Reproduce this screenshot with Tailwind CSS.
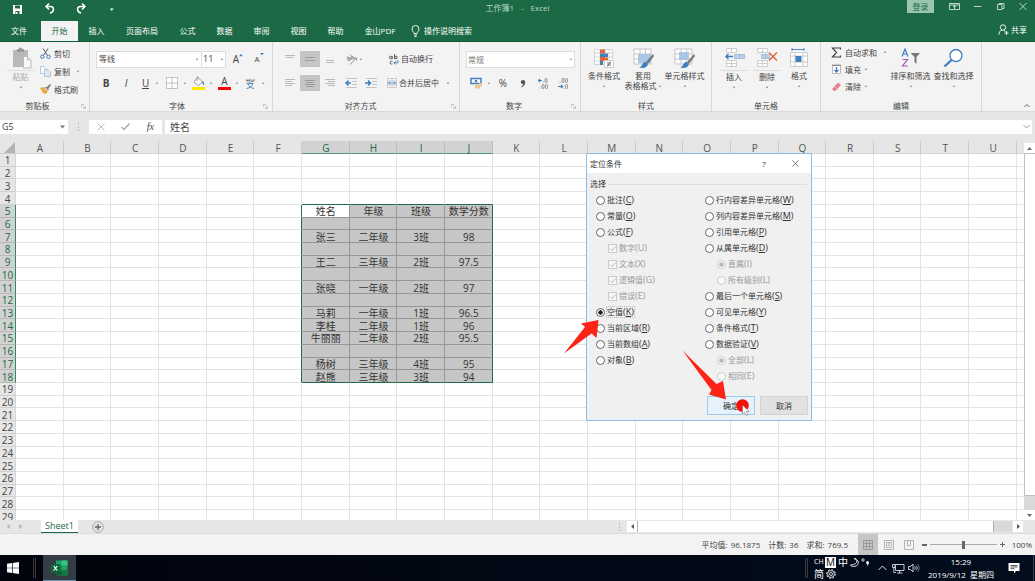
<!DOCTYPE html>
<html lang="zh-CN">
<head>
<meta charset="utf-8">
<title>工作簿1 - Excel</title>
<script src="https://cdn.jsdelivr.net/npm/@tailwindcss/browser@4"></script>
</head>
<body class="h-screen flex flex-col overflow-hidden bg-[#e6e6e6] font-['Open_Sans','Noto_Sans_CJK_SC',sans-serif] text-[8px] leading-[10px] text-[#444]">
<svg class="hidden">
  <symbol id="caret" viewBox="0 0 4 3"><path d="M0.700 0.700h2.600L2 2.300z" fill="#777"/></symbol>
  <symbol id="launch" viewBox="0 0 6 6"><path d="M0.5 4V0.5H4M2.5 2.5l2.5 2.5M5.5 2.5v3h-3" fill="none" stroke="#aaa" stroke-width=".8"/></symbol>
  <symbol id="cells" viewBox="0 0 20 20"><path d="M1 1h17v15H1zM1 6h17M1 11h17M7 1v15M12.500 1v15" fill="#fff" stroke="#c4c4c4"/></symbol>
  <symbol id="brush" viewBox="0 0 16 16"><path d="M15 1l-7 8 2 2 6-8z" fill="#777"/><path d="M8 9c-2-.5-3.500 1-4 3-.5 1.500-2 2-3 2 3 1.500 8 1.500 9-3z" fill="#3f7fc0"/></symbol>
</svg>

<header class="shrink-0 bg-[#1b6a45] text-white border-b border-[#0d5c38]">
  <div class="relative flex h-[21px] items-start justify-between">
    <div class="flex items-center pl-[12px] pt-[3px]">
      <button aria-label="保存" class="w-[32px]"><svg class="size-[11px]" viewBox="0 0 11 11"><path d="M1 1h9v9H1z" fill="#fff"/><path d="M3 1.500h5v3H3zM3.500 7h4v3h-4z" fill="#1b6a45"/><path d="M4 8h1.500v2H4z" fill="#fff"/></svg></button>
      <button aria-label="撤消" class="w-[31px]"><svg class="size-[12px]" viewBox="0 0 12 12" fill="none" stroke="#fff" stroke-width="1.500"><path d="M5 0.500L2 3.500l3 3M2 3.500h4.500c4 0 4 5.500-.5 6.500"/></svg></button>
      <button aria-label="恢复" class="w-[33px]"><svg class="size-[12px]" viewBox="0 0 12 12" fill="none" stroke="#fff" stroke-width="1.500"><path d="M7 0.500l3 3-3 3M10 3.500H5.500c-4 0-4 5.500 .5 6.500"/></svg></button>
      <button aria-label="自定义快速访问工具栏"><svg class="w-[7px] h-[5px]" viewBox="0 0 7 5"><path d="M2 1.500h3.600L3.800 4z" fill="#fff"/></svg></button>
    </div>
    <h1 class="absolute left-1/2 top-[3px] -translate-x-1/2 flex gap-[7px] text-[#b9d5c6]"><span>工作簿1</span><span>-</span><span>Excel</span></h1>
    <div class="flex items-start">
      <button class="h-[13px] w-[27px] bg-[#9ac6ae] text-[#1b6a45] mr-[15px]">登录</button>
      <button aria-label="功能区显示选项" class="w-[25px] pt-[2px]"><svg class="w-[11px] h-[9px]" viewBox="0 0 11 9" fill="none" stroke="#b9d5c6"><path d="M.5 1.500h10v6H.5zM.5 3h10M5.500 3v4.500M4 5l1.500-1.500L7 5"/></svg></button>
      <button aria-label="最小化" class="w-[23px] pt-[2px]"><svg class="w-[8px] h-[9px]" viewBox="0 0 8 9"><path d="M0 4.500h7.500" stroke="#b9d5c6"/></svg></button>
      <button aria-label="还原" class="w-[22px] pt-[2px]"><svg class="w-[8px] h-[9px]" viewBox="0 0 8 9" fill="none" stroke="#b9d5c6"><path d="M.5 2.500H5v5H.5zM2 2.500v-1h5v5H5"/></svg></button>
      <button aria-label="关闭" class="w-[16px] pt-[2px]"><svg class="w-[8px] h-[9px]" viewBox="0 0 8 9"><path d="M.5 1l7 7M7.500 1l-7 7" stroke="#b9d5c6"/></svg></button>
    </div>
  </div>
  <nav class="flex h-[20px] items-stretch">
    <button class="w-[41px] pr-[3px]">文件</button>
    <button class="w-[37px] bg-[#f3f3f3] text-[#1b6a45]">开始</button>
    <button class="w-[37px]">插入</button>
    <button class="w-[54px]">页面布局</button>
    <button class="w-[37px]">公式</button>
    <button class="w-[37px]">数据</button>
    <button class="w-[37px]">审阅</button>
    <button class="w-[37px]">视图</button>
    <button class="w-[37px]">帮助</button>
    <button class="w-[52px]">金山PDF</button>
    <button class="flex items-center gap-[4px] pl-[5px]"><svg class="w-[9px] h-[12px]" viewBox="0 0 9 12" fill="none" stroke="#fff" stroke-width=".9"><path d="M3 8.500C3 7 1 6.500 1 4a3.500 3.500 0 0 1 7 0c0 2.500-2 3-2 4.500zM3 10h3M3.500 11.500h2"/></svg>操作说明搜索</button>
    <button class="ml-auto mr-[8px] flex items-center gap-[2px] pb-[3px]"><svg class="size-[11px]" viewBox="0 0 11 11" fill="none" stroke="#fff" stroke-width=".9"><circle cx="5" cy="3.500" r="2.700"/><path d="M1 10.500c0-2 1-4 3-4.300M5.500 6.200l2 1.300M8.500 7v4M6.500 9h4"/></svg>共享</button>
  </nav>
</header>

<section aria-label="功能区" class="flex h-[70px] shrink-0 bg-[#f3f3f3] border-b border-[#dadada]">
  <!-- 剪贴板 -->
  <div class="relative flex w-[90px] flex-col border-r border-[#d8d8d8]">
    <div class="flex h-[58px]">
      <button class="flex w-[40px] flex-col items-center pt-[5px] pl-px text-[#aaa]">
        <svg class="ml-[3px] w-[20px] h-[22px]" viewBox="0 0 20 22"><path d="M1 3h15v17H1z" fill="#b9b9b9"/><path d="M5 3V2h2c0-2 3-2 3 0h2v3H5z" fill="#999"/><path d="M11.500 9.500h4l3.500 3.500v8h-7.500z" fill="#f8f8f8" stroke="#bbb"/><path d="M15.500 9.500V13H19" fill="none" stroke="#bbb"/></svg>
        <span class="mt-[1px] border-t border-[#ddd] px-[6px] pt-[1px]">粘贴</span>
        <svg class="mt-[4px] w-[4px] h-[3px]"><use href="#caret"/></svg>
      </button>
      <div class="flex flex-col gap-[7px] pt-[6px]">
        <button class="flex h-[11px] items-center gap-[3px]"><svg class="size-[11px]" viewBox="0 0 11 11" fill="none"><path d="M3 .5l4.500 7M8 .5L3.500 7.500" stroke="#555"/><circle cx="2.300" cy="8.700" r="1.700" stroke="#3f7fc0"/><circle cx="8.500" cy="8.700" r="1.700" stroke="#3f7fc0"/></svg>剪切</button>
        <button class="flex h-[11px] items-center gap-[3px]"><svg class="size-[11px]" viewBox="0 0 11 11" fill="#fff" stroke="#a9b9cc" stroke-width=".8"><path d="M.5.5H4l2 2v5H.5z"/><path d="M4.500 3.500h3.500l2.500 2.500v4.500h-6z" fill="#dce8f4"/></svg>复制<svg class="ml-[3px] w-[4px] h-[3px]"><use href="#caret"/></svg></button>
        <button class="flex h-[11px] items-center gap-[3px]"><svg class="size-[11px]" viewBox="0 0 11 11"><path d="M0 4l4-1 4 4-2 3-3-1z" fill="#e9a94d"/><path d="M5 3l2 0 3-3 1 1-2.500 3.500v2z" fill="#777"/></svg>格式刷</button>
      </div>
    </div>
    <div class="pr-[14px] pt-[1px] text-center">剪贴板</div>
    <svg class="absolute right-[3px] bottom-[2px] size-[5px]"><use href="#launch"/></svg>
  </div>
  <!-- 字体 -->
  <div class="relative flex w-[183px] flex-col border-r border-[#d8d8d8] pl-[6px]">
    <div class="flex h-[58px] flex-col pt-[9px]">
      <div class="flex h-[16px] items-center">
        <label class="flex h-[17px] w-[106px] items-center justify-between border border-[#dcdcdc] bg-white px-[2px]"><input aria-label="字体" value="等线" class="w-[80px] outline-none"><svg class="w-[4px] h-[3px]"><use href="#caret"/></svg></label>
        <label class="flex h-[17px] w-[24px] items-center justify-between border border-l-0 border-[#dcdcdc] bg-white px-[1px]"><input aria-label="字号" value="11" class="w-[14px] text-[9px] outline-none"><svg class="w-[4px] h-[3px]"><use href="#caret"/></svg></label>
        <button aria-label="增大字号" class="relative w-[20px] text-[10px]">A<svg class="absolute left-[13px] top-0 w-[4px] h-[3px]" viewBox="0 0 5 4"><path d="M0 3L2.500 0 5 3z" fill="#3f7fc0"/></svg></button>
        <button aria-label="减小字号" class="relative w-[22px] text-[8px]">A<svg class="absolute left-[14px] top-[-1px] w-[4px] h-[3px]" viewBox="0 0 5 4"><path d="M0 0h5L2.500 3z" fill="#3f7fc0"/></svg></button>
      </div>
      <div class="mt-[8px] flex h-[16px] items-center text-[10px]">
        <button class="w-[20px] font-bold">B</button>
        <button class="w-[20px] italic">I</button>
        <button class="flex w-[30px] items-center pl-[6px] gap-[6px]"><span class="border-b border-[#444] leading-[10px]">U</span><svg class="w-[4px] h-[3px]"><use href="#caret"/></svg></button>
        <button aria-label="边框" class="flex w-[26px] items-center gap-[5px]"><svg class="size-[12px]" viewBox="0 0 12 12"><path d="M.5.5h11v11H.5zM6 .5v11M.5 6h11" fill="#fff" stroke="#c2c2c2"/></svg><svg class="w-[4px] h-[3px]"><use href="#caret"/></svg></button>
        <button aria-label="填充颜色" class="flex w-[26px] items-center gap-[4px]"><svg class="w-[13px] h-[14px]" viewBox="0 0 13 14"><path d="M5.500 1.500l5 4-4 4-4.500-3.500z" fill="#fff" stroke="#888" stroke-width=".8"/><path d="M5 5V1.500c0-1 1.500-1 1.500 0" fill="none" stroke="#888" stroke-width=".8"/><path d="M10 5c2 .5 2.500 2 2 4-1.200 0-1.500-1.500-2-4z" fill="#3f7fc0"/><path d="M0 11h13v3H0z" fill="#ffe800"/></svg><svg class="w-[4px] h-[3px]"><use href="#caret"/></svg></button>
        <button aria-label="字体颜色" class="flex w-[26px] items-center gap-[4px]"><span class="w-[13px] border-b-3 border-[#f00] text-center leading-[11px]">A</span><svg class="w-[4px] h-[3px]"><use href="#caret"/></svg></button>
        <button aria-label="拼音" class="flex w-[26px] items-center gap-[5px] pl-[1px]"><svg class="size-[11px]" viewBox="0 0 11 11" fill="none"><path d="M1 1.500l1 2 1-2 1 2 1-2M6 1v2.500h2V2M9 1v2.500" stroke="#666" stroke-width=".8"/><path d="M1.500 5.500h7M5 4v1.500M3 6c.5 2 2.500 4 6 4.500M7.500 6c-.5 2-2.500 4-6 4.500" stroke="#3f7fc0" stroke-width=".9"/></svg><svg class="w-[4px] h-[3px]"><use href="#caret"/></svg></button>
      </div>
    </div>
    <div class="pl-[2px] pr-[16px] pt-[1px] text-center">字体</div>
    <svg class="absolute right-[4px] bottom-[2px] size-[5px]"><use href="#launch"/></svg>
  </div>
  <!-- 对齐方式 -->
  <div class="relative flex w-[187px] flex-col border-r border-[#d8d8d8] pl-[7px]">
    <div class="flex h-[58px] flex-col pt-[9px]">
      <div class="flex h-[16px] items-center">
        <button aria-label="顶端对齐" class="flex w-[20px] justify-center"><svg class="size-[10px]" viewBox="0 0 10 10" stroke="#bbb"><path d="M0 1.500h10M1 3.500h8"/></svg></button>
        <button aria-label="垂直居中" class="flex h-[16px] w-[20px] items-center justify-center bg-[#c6c6c6]"><svg class="size-[10px]" viewBox="0 0 10 10" stroke="#999"><path d="M0 3.500h10M0 6.500h10"/></svg></button>
        <button aria-label="底端对齐" class="flex w-[20px] justify-center"><svg class="size-[10px]" viewBox="0 0 10 10" stroke="#bbb"><path d="M1 6.500h8M1 8.500h8"/></svg></button>
        <button aria-label="方向" class="ml-[6px] flex w-[42px] items-center gap-[2px]"><svg class="size-[11px]" viewBox="0 0 11 11" fill="none" stroke="#777" stroke-width=".8"><circle cx="3" cy="5" r="1.500"/><path d="M1 2.500l3.500 3.500M4 .5L7 4"/><circle cx="6.500" cy="4" r="1.300"/><path d="M4 10.500L10.500 4M8 4h2.500v2.500"/></svg><svg class="w-[4px] h-[3px]"><use href="#caret"/></svg></button>
        <button class="flex items-center gap-[2px]"><svg class="size-[11px]" viewBox="0 0 10 10" fill="none" stroke="#555" stroke-width=".9"><circle cx="2.500" cy="3.200" r="1.200"/><path d="M3.800 2v2.500M6 0v4.500"/><circle cx="7.300" cy="3.200" r="1.200"/><path d="M4 6.700c-3-1-3 3.300 0 2.300"/><path d="M9 5.500V8H5.500M7 6.500L5.500 8 7 9.500" stroke="#3f7fc0"/></svg>自动换行</button>
      </div>
      <div class="mt-[8px] flex h-[16px] items-center">
        <button aria-label="左对齐" class="flex w-[20px] justify-center"><svg class="size-[10px]" viewBox="0 0 10 10" stroke="#bbb"><path d="M0 1.500h10M0 3.500h7M0 5.500h10M0 7.500h7"/></svg></button>
        <button aria-label="居中" class="flex h-[16px] w-[20px] items-center justify-center bg-[#c6c6c6]"><svg class="size-[10px]" viewBox="0 0 10 10" stroke="#999"><path d="M0 2.500h10M1.500 4.500h7M0 6.500h10M1.500 8.500h7"/></svg></button>
        <button aria-label="右对齐" class="flex w-[20px] justify-center"><svg class="size-[10px]" viewBox="0 0 10 10" stroke="#bbb"><path d="M0 1.500h10M3 3.500h7M0 5.500h10M3 7.500h7"/></svg></button>
        <button aria-label="减少缩进量" class="ml-[5px] w-[20px]"><svg class="w-[12px] h-[10px]" viewBox="0 0 12 10"><path d="M1 .5h11M7 3.500h5M7 6.500h5M1 9.500h11" stroke="#c4c4c4"/><path d="M6 5H1.500M3.500 2.500L1 5l2.500 2.500" stroke="#3f7fc0" stroke-width="1.500" fill="none"/></svg></button>
        <button aria-label="增加缩进量" class="w-[22px]"><svg class="w-[12px] h-[10px]" viewBox="0 0 12 10"><path d="M1 .5h11M7 3.500h5M7 6.500h5M1 9.500h11" stroke="#c4c4c4"/><path d="M0 5h5.500M3 2.500L5.500 5 3 7.500" stroke="#3f7fc0" stroke-width="1.500" fill="none"/></svg></button>
        <button class="flex items-center gap-[2px]"><svg class="size-[10px]" viewBox="0 0 10 10" fill="none"><path d="M.5.5h9v9h-9zM.5 3h9M.5 7h9M5 .5V3M5 7v2.500" fill="#fff" stroke="#c8c8c8"/><path d="M1.500 5h7M3 3.500L1.500 5 3 6.500M7 3.500L8.500 5 7 6.500" stroke="#3f7fc0" stroke-width=".9"/></svg>合并后居中<svg class="ml-[5px] w-[4px] h-[3px]"><use href="#caret"/></svg></button>
      </div>
    </div>
    <div class="pr-[18px] pt-[1px] text-center">对齐方式</div>
    <svg class="absolute right-[3px] bottom-[2px] size-[5px]"><use href="#launch"/></svg>
  </div>
  <!-- 数字 -->
  <div class="relative flex w-[121px] flex-col border-r border-[#d8d8d8] pl-[6px]">
    <div class="flex h-[58px] flex-col pt-[9px]">
      <label class="flex h-[17px] w-[109px] items-center justify-between border border-[#dcdcdc] bg-white px-[1px]"><input aria-label="数字格式" value="常规" class="w-[90px] outline-none text-[#777]"><svg class="w-[4px] h-[3px]"><use href="#caret"/></svg></label>
      <div class="mt-[7px] flex h-[16px] items-center pl-[4px]">
        <button aria-label="会计数字格式" class="flex w-[27px] items-center gap-[4px]"><svg class="w-[13px] h-[12px]" viewBox="0 0 13 12"><path d="M1 1.500h10v5H1z" fill="#fff" stroke="#3f7fc0" stroke-width="1.500"/><circle cx="6" cy="4" r="1.300" fill="#3f7fc0"/><path d="M5 8h5v3.500H5zM9 6h3v3.500H9z" fill="#f0c48c"/></svg><svg class="w-[4px] h-[3px]"><use href="#caret"/></svg></button>
        <button class="w-[12px] text-[10px]">%</button>
        <button aria-label="千位分隔样式" class="ml-[11px] w-[18px]"><svg class="w-[6px] h-[9px]" viewBox="0 0 6 9"><path d="M3 1c3 0 3.500 5-1.500 7.500L1 8c1.500-1 2-2 2-3C0 5 0 1 3 1z" fill="#555"/></svg></button>
        <button aria-label="增加小数位数" class="w-[20px]"><svg class="w-[10px] h-[11px]" viewBox="0 0 10 11" fill="none" stroke="#777" stroke-width=".8"><path d="M4 2.500H.5M2 1L.5 2.500 2 4" stroke="#3f7fc0" stroke-width="1.200"/><rect x="7" y=".5" width="2" height="4" rx="1"/><rect x="4" y="6.500" width="2" height="4" rx="1"/><rect x="7.500" y="6.500" width="2" height="4" rx="1"/><path d="M5 4h.8M1.500 10.200h.8"/></svg></button>
        <button aria-label="减少小数位数"><svg class="w-[11px] h-[11px]" viewBox="0 0 11 11" fill="none" stroke="#777" stroke-width=".8"><path d="M0 8.500h4.500M3 7l1.500 1.500L3 10" stroke="#3f7fc0" stroke-width="1.200"/><rect x="4" y=".5" width="2" height="4" rx="1"/><rect x="7.500" y=".5" width="2" height="4" rx="1"/><rect x="7.500" y="6.500" width="2" height="4" rx="1"/><path d="M1.500 4.200h.8M5.500 10.200h.8"/></svg></button>
      </div>
    </div>
    <div class="pr-[18px] pt-[1px] text-center">数字</div>
    <svg class="absolute right-[4px] bottom-[2px] size-[5px]"><use href="#launch"/></svg>
  </div>
  <!-- 样式 -->
  <div class="flex w-[131px] flex-col border-r border-[#d8d8d8]">
    <div class="flex h-[58px] pl-[4px] pt-[6px] text-center">
      <button class="flex w-[38px] flex-col items-center">
        <svg class="size-[21px]" viewBox="0 0 21 21"><path d="M.5 1.500h18v15H.5zM.5 5h18M.5 9h18M.5 13h18M6 1.500v15M11 1.500v15M15 1.500v15" fill="#fff" stroke="#ccc" stroke-width=".8"/><path d="M6 1.500h5v4H6zM11 9.500h3v3h-3z" fill="#e2663a"/><path d="M6 5.500h8v3.500H6z" fill="#3f7fc0"/><path d="M6 9h5v4H6z" fill="#e2663a"/><path d="M6 13h3v4H6z" fill="#3f7fc0"/><path d="M10.500 12.500h9v7h-9z" fill="#fff" stroke="#ccc"/><path d="M13 15h4M13 17h4M16.500 13.500l-3 5" stroke="#555" stroke-width=".8"/></svg>
        <span class="mt-[2px] whitespace-nowrap">条件格式</span><svg class="mt-[4px] w-[4px] h-[3px]"><use href="#caret"/></svg>
      </button>
      <button class="flex w-[40px] flex-col items-center">
        <svg class="size-[21px]" viewBox="0 0 21 21"><use href="#cells" width="20" height="20"/><path d="M5 6h13v9H5z" fill="#a9c6e4"/><use href="#brush" x="5" y="5" width="16" height="16"/></svg>
        <span class="mt-[2px] flex flex-col whitespace-nowrap"><span>套用</span><span class="flex items-center gap-[1px]">表格格式<svg class="w-[4px] h-[3px]"><use href="#caret"/></svg></span></span>
      </button>
      <button class="flex w-[43px] flex-col items-center">
        <svg class="size-[21px]" viewBox="0 0 21 21"><use href="#cells" width="20" height="20"/><path d="M5 4h10v8H5z" fill="#a9c6e4"/><use href="#brush" x="5" y="5" width="16" height="16"/></svg>
        <span class="mt-[2px] whitespace-nowrap">单元格样式</span><svg class="mt-[4px] w-[4px] h-[3px]"><use href="#caret"/></svg>
      </button>
    </div>
    <div class="pt-[1px] text-center">样式</div>
  </div>
  <!-- 单元格 -->
  <div class="flex w-[109px] flex-col border-r border-[#d8d8d8]">
    <div class="flex h-[58px] gap-[3px] pl-[7px] pt-[6px]">
      <button class="flex w-[30px] flex-col items-center">
        <svg class="size-[21px]" viewBox="0 0 21 21"><path d="M2.500.5h10v4h-10zM7.500.5v4M2.500 12.500h10v6h-10zM7.500 12.500v6M2.500 15.500h10" fill="#fff" stroke="#ccc"/><path d="M10.500 6.500h10v4h-10zM15.500 6.500v4" fill="#b9d0ea" stroke="#9db4cc" stroke-width=".8"/><path d="M9 8.500H2M4.500 6L2 8.500 4.500 11" stroke="#3f7fc0" stroke-width="1.500" fill="none"/></svg>
        <span class="mt-[1px] border-t border-[#ddd] px-[6px] pt-[1px]">插入</span><svg class="mt-[4px] w-[4px] h-[3px]"><use href="#caret"/></svg>
      </button>
      <button class="flex w-[30px] flex-col items-center">
        <svg class="size-[21px]" viewBox="0 0 21 21"><path d="M.5.5h10v4H.5zM5.500.5v4M.5 12.500h10v6H.5zM5.500 12.500v6M.5 15.500h10" fill="#fff" stroke="#ccc"/><path d="M4.500 6.500h8v4h-8zM8.500 6.500v4" fill="#b9d0ea" stroke="#9db4cc" stroke-width=".8"/><path d="M12 4.500l8 8M20 4.500l-8 8" stroke="#e2663a" stroke-width="1.500"/></svg>
        <span class="mt-[1px] border-t border-[#ddd] px-[6px] pt-[1px]">删除</span><svg class="mt-[4px] w-[4px] h-[3px]"><use href="#caret"/></svg>
      </button>
      <button class="flex w-[28px] flex-col items-center">
        <svg class="size-[21px]" viewBox="0 0 21 21"><path d="M1.500 4.500h17v14h-17zM6 4.500v14M14 4.500v14M1.500 8h17M1.500 14h17" fill="#fff" stroke="#ccc"/><path d="M6.500 8h6v6h-6z" fill="#3f7fc0"/><path d="M3 1.500h12M3 0v3M15 0v3" stroke="#3f7fc0" stroke-width=".9"/></svg>
        <span class="mt-[2px]">格式</span><svg class="mt-[4px] w-[4px] h-[3px]"><use href="#caret"/></svg>
      </button>
    </div>
    <div class="pt-[1px] text-center">单元格</div>
  </div>
  <!-- 编辑 -->
  <div class="flex w-[161px] flex-col border-r border-[#d8d8d8]">
    <div class="flex h-[58px] pl-[10px]">
      <div class="flex w-[58px] flex-col gap-[6px] pt-[5px]">
        <button class="flex h-[11px] items-center gap-[3px]"><svg class="size-[11px]" viewBox="0 0 11 11"><path d="M9.500 2.500V1H1.500L5.500 5.500l-4 4.500h8V8.500" fill="none" stroke="#444" stroke-width="1.200"/></svg>自动求和<svg class="ml-[3px] w-[4px] h-[3px]"><use href="#caret"/></svg></button>
        <button class="flex h-[11px] items-center gap-[3px]"><svg class="size-[11px]" viewBox="0 0 11 11"><path d="M1.500 1.500h8v8h-8z" fill="#fff" stroke="#bbb"/><path d="M1 1.200h9" stroke="#777"/><path d="M5.500 3v5M3.500 6l2 2 2-2" fill="none" stroke="#3f7fc0" stroke-width="1.300"/></svg>填充<svg class="w-[4px] h-[3px]"><use href="#caret"/></svg></button>
        <button class="flex h-[11px] items-center gap-[3px]"><svg class="size-[11px]" viewBox="0 0 11 11"><path d="M7 1.500L10 4 5 9.500 3 10 1 8z" fill="#e9808c"/><path d="M3.500 5.500L6 8" stroke="#f9c9cf" stroke-width=".8"/></svg>清除<svg class="w-[4px] h-[3px]"><use href="#caret"/></svg></button>
      </div>
      <button class="flex w-[43px] flex-col items-center pt-[6px]">
        <svg class="size-[21px]" viewBox="0 0 21 21" fill="none" stroke-width="1.200"><path d="M2 8.500L5 1l3 7.500M3 6h4" stroke="#3f7fc0"/><path d="M2.500 11.500h5l-5 6.500h5.500" stroke="#9a5fb5"/><path d="M10.500 5h9.500L16.500 9v6.500l-2-1V9z" fill="#777"/></svg>
        <span class="mt-[2px] whitespace-nowrap">排序和筛选</span><svg class="mt-[4px] w-[4px] h-[3px]"><use href="#caret"/></svg>
      </button>
      <button class="flex w-[43px] flex-col items-center pt-[6px]">
        <svg class="size-[21px]" viewBox="0 0 21 21" fill="none" stroke="#3f7fc0"><circle cx="13" cy="7.500" r="6" fill="#fff" stroke-width="1.300"/><path d="M8.500 12L1.500 18.500" stroke-width="2.300"/></svg>
        <span class="mt-[2px] whitespace-nowrap">查找和选择</span><svg class="mt-[4px] w-[4px] h-[3px]"><use href="#caret"/></svg>
      </button>
    </div>
    <div class="pt-[1px] text-center">编辑</div>
  </div>
  <button aria-label="折叠功能区" class="ml-auto mr-[5px] self-end pb-[3px]"><svg class="w-[6px] h-[5px]" viewBox="0 0 6 5"><path d="M.5 4L3 1.500 5.500 4" fill="none" stroke="#666"/></svg></button>
</section>

<section aria-label="编辑栏" class="flex h-[29px] shrink-0 items-center pr-[3px]">
  <label class="flex h-[14px] w-[68px] items-center justify-between bg-white pl-[2px] pr-[3px]"><input aria-label="名称框" value="G5" class="w-[50px] text-[9px] outline-none"><svg class="w-[5px] h-[4px]" viewBox="0 0 5 4"><path d="M0 .5h5L2.500 3.500z" fill="#777"/></svg></label>
  <svg class="mx-[9px] w-[3px] h-[8px]" viewBox="0 0 3 8"><path d="M1.500 0v8" stroke="#aaa" stroke-dasharray="1.300 2"/></svg>
  <div class="flex h-[14px] w-[73px] items-center justify-around bg-white">
    <button aria-label="取消输入"><svg class="size-[8px]" viewBox="0 0 8 8"><path d="M.5.5l7 7M7.500.5l-7 7" stroke="#bbb"/></svg></button>
    <button aria-label="输入"><svg class="size-[9px]" viewBox="0 0 9 9"><path d="M.5 5L3 7.500 8.500 1.500" stroke="#aaa" stroke-width="1.400" fill="none"/></svg></button>
    <button class="font-['Liberation_Serif',serif] italic text-[10px]">fx</button>
  </div>
  <label class="ml-[3px] flex h-[14px] grow items-center bg-white pl-[5px] pr-[2px]"><input aria-label="公式" value="姓名" class="min-w-0 grow text-[10px] outline-none"><svg class="w-[7px] h-[5px]" viewBox="0 0 7 5"><path d="M.5 1l3 3 3-3" fill="none" stroke="#999"/></svg></label>
</section>

<main class="relative flex min-h-0 flex-1">
  <div class="min-w-0 grow overflow-hidden bg-white">
    <table id="sheet" class="h-[382px] w-full table-fixed border-separate border-spacing-0 text-center text-[10px] leading-[9px]">
      <colgroup id="widths"><col class="w-[16px]"></colgroup>
      <thead><tr id="letters" class="h-[13px] bg-[#e6e6e6]"></tr></thead>
      <tbody id="rows"></tbody>
    </table>
  </div>
  <div class="flex w-[11px] shrink-0 flex-col bg-[#e6e6e6] pt-[2px]">
    <button aria-label="向上滚动" class="flex h-[10px] items-center justify-center bg-white"><svg class="w-[5px] h-[3px]" viewBox="0 0 5 3"><path d="M0 3h5L2.500 0z" fill="#666"/></svg></button>
    <div class="flex grow flex-col bg-[#d9d9d9]"><div class="h-[343px] border-y border-l border-[#c0c0c0] bg-white"></div></div>
    <button aria-label="向下滚动" class="flex h-[10px] items-center justify-center bg-white"><svg class="w-[5px] h-[3px]" viewBox="0 0 5 3"><path d="M0 0h5L2.500 3z" fill="#666"/></svg></button>
  </div>

  <!-- 定位条件 -->
  <form role="dialog" aria-label="定位条件" class="absolute left-[586px] top-[12px] flex h-[268px] w-[226px] flex-col border border-[#8fbde6] bg-[#f0f0f0] text-[#333]">
    <div class="flex h-[19px] items-center bg-white pl-[3px]">
      <h2 class="grow">定位条件</h2>
      <button type="button" class="w-[30px]">?</button>
      <button type="button" aria-label="关闭" class="flex w-[32px] justify-center"><svg class="size-[7px]" viewBox="0 0 7 7"><path d="M.5.5l6 6M6.500.5l-6 6" stroke="#555" stroke-width=".8"/></svg></button>
    </div>
    <div class="flex items-center gap-[2px] pl-[3px] pr-[4px] pt-[6px]"><span>选择</span><span class="h-px grow bg-[#dedede]"></span></div>
    <div class="flex pt-[3px]">
      <div id="left" class="w-[109px] pl-[9px]"></div>
      <div id="right" class="pl-[9px]"></div>
    </div>
    <div class="mt-auto flex justify-end gap-[5px] pb-[5px] pr-[3px]">
      <button type="button" class="h-[19px] w-[48px] border border-[#9ccbee] bg-[#e5f1fb]">确定</button>
      <button type="button" class="h-[19px] w-[48px] border border-[#d2d2d2] bg-[#e1e1e1]">取消</button>
    </div>
  </form>
  <!-- 标注箭头与点击光标 -->
  <svg class="pointer-events-none absolute left-[560px] top-[139px] h-[150px] w-[200px]" viewBox="0 0 200 150">
    <path d="M4 73.500L25 47 21 43.500 38.500 40 36.500 58 31.500 53.500z" fill="#fb2416"/>
    <path d="M122.500 70.500L156.500 104 163 101 166 119.500 149 114.500 151.500 110z" fill="#fb2416"/>
    <circle cx="182.500" cy="125.500" r="6.300" fill="#f50f05"/>
    <path d="M182.500 125v9l2-2 1.700 3.500 1.500-.7-1.500-3.300h3z" fill="#fff" stroke="#666" stroke-width=".5"/>
  </svg>
</main>

<section aria-label="工作表标签" class="flex h-[13px] shrink-0 items-center bg-[#e6e6e6]">
  <div class="flex w-[41px] gap-[9px] pl-[6px]"><svg class="w-[4px] h-[5px]" viewBox="0 0 4 5"><path d="M4 0v5L.5 2.500z" fill="#bbb"/></svg><svg class="w-[4px] h-[5px]" viewBox="0 0 4 5"><path d="M0 0v5l3.500-2.500z" fill="#bbb"/></svg></div>
  <button class="h-[13px] w-[37px] border-b border-[#1b6a45] bg-white text-[9px] text-[#1b6a45]">Sheet1</button>
  <button aria-label="新工作表" class="ml-[14px]"><svg class="size-[12px]" viewBox="0 0 12 12" fill="none" stroke="#999"><circle cx="6" cy="6" r="5.300" stroke-width=".8"/><path d="M3 6h6M6 3v6" stroke="#666" stroke-width="1.300"/></svg></button>
  <svg class="ml-auto w-[3px] h-[8px]" viewBox="0 0 3 8"><path d="M1.500 0v8" stroke="#aaa" stroke-dasharray="1.300 2"/></svg>
  <button aria-label="向左滚动" class="ml-[6px] flex h-[11px] w-[10px] items-center justify-center bg-white"><svg class="w-[3px] h-[5px]" viewBox="0 0 3 5"><path d="M3 0v5L0 2.500z" fill="#555"/></svg></button>
  <div class="mr-px flex h-[11px] w-[375px] bg-[#d9d9d9]"><div class="w-[357px] border-x border-[#b0b0b0] bg-white"></div></div>
  <button aria-label="向右滚动" class="mr-[12px] flex h-[11px] w-[10px] items-center justify-center bg-white"><svg class="w-[3px] h-[5px]" viewBox="0 0 3 5"><path d="M0 0v5l3-2.500z" fill="#555"/></svg></button>
</section>

<footer class="flex h-[22px] shrink-0 items-center justify-end border-t border-[#dcdcdc] bg-[#f3f3f3] pr-[3px]">
  <span class="flex gap-[8px] pr-[10px]"><span class="flex gap-[3px]"><span>平均值:</span><span>96.1875</span></span><span class="flex gap-[3px]"><span>计数:</span><span>36</span></span><span class="flex gap-[3px]"><span>求和:</span><span>769.5</span></span></span>
  <button aria-label="普通" class="flex h-[21px] w-[20px] items-center justify-center bg-[#c6c6c6]"><svg class="size-[10px]" viewBox="0 0 10 10"><path d="M.5.5h9v9h-9zM.5 3.500h9M.5 6.500h9M3.500.5v9M6.500.5v9" stroke="#999" fill="none"/></svg></button>
  <button aria-label="页面布局视图" class="flex w-[21px] justify-center"><svg class="size-[10px]" viewBox="0 0 10 10"><path d="M.5.5h9v9h-9zM2.500 2.500h5v5h-5zM4 4h2M4 5.500h2" stroke="#b5b5b5" fill="none"/></svg></button>
  <button aria-label="分页预览" class="flex w-[20px] justify-center"><svg class="size-[10px]" viewBox="0 0 10 10"><path d="M.5.5h9v9h-9zM3.500.5v5h3v-5" stroke="#b5b5b5" fill="none"/></svg></button>
  <button aria-label="缩小" class="ml-[3px] h-[2px] w-[5px] bg-[#666]"></button>
  <input type="range" aria-label="缩放" class="mx-[3px] h-[8px] w-[67px] appearance-none bg-[linear-gradient(#aaa,#aaa)] bg-[length:100%_1px] bg-center bg-no-repeat [&::-webkit-slider-thumb]:h-[8px] [&::-webkit-slider-thumb]:w-[3px] [&::-webkit-slider-thumb]:appearance-none [&::-webkit-slider-thumb]:bg-[#666]">
  <button aria-label="放大"><svg class="size-[5px]" viewBox="0 0 5 5"><path d="M0 2.500h5M2.500 0v5" stroke="#666"/></svg></button>
  <span class="ml-[5px] w-[22px] text-right">100%</span>
</footer>

<div class="flex h-[26px] shrink-0 items-stretch bg-linear-to-r from-[#01040c] to-[#020d1d] text-white">
  <button aria-label="开始" class="flex w-[33px] items-center pl-[7px]"><svg class="size-[12px]" viewBox="0 0 12 12" fill="#fff"><path d="M0 1.700L5 1v4.700H0zM5.700.9L12 0v5.700H5.700zM0 6.300h5V11l-5-.7zM5.700 6.300H12V12l-6.300-.9z"/></svg></button>
  <span class="my-[3px] mr-[7px] w-[3px] border-x border-[#3c3c3c]"></span>
  <button aria-label="Excel" class="flex w-[33px] items-center justify-center border-b border-[#6f8fae] bg-[#343c46]"><svg class="w-[17px] h-[16px]" viewBox="0 0 17 16"><path d="M5 .5h11.500v15H5z" fill="#21a366"/><path d="M10.500.5h6v5h-6z" fill="#33c481"/><path d="M5 5.500h5.500v5H5z" fill="#107c41"/><path d="M5 10.500h11.500v5H5z" fill="#185c37"/><path d="M10.500 10.500h6v5h-6z" fill="#107c41"/><rect y="4" width="9" height="8.500" rx="1" fill="#0e6a3a"/><path d="M2.800 6l3.400 4.500M6.200 6L2.800 10.500" stroke="#fff" stroke-width="1.200"/></svg></button>
  <span class="my-[3px] ml-auto mr-[6px] w-[3px] border-x border-[#3c3c3c]"></span>
  <div class="flex w-[64px] flex-col justify-center text-[10px] leading-[12px]">
    <div class="flex items-center gap-[2px]"><span class="w-[9px] text-[7px]">CH</span><span class="w-[11px] h-[11px] bg-white text-center leading-[11px] text-black">M</span><span>中</span><svg class="size-[9px]" viewBox="0 0 9 9"><path d="M4 .5c4 1 4.500 6-3.500 6.500C1.500 9.500 9 9 8.300 4 7.500 1.500 5.500.5 4 .5z" fill="none" stroke="#fff" stroke-width=".9"/></svg><svg class="w-[9px] h-[9px]" viewBox="0 0 9 9"><circle cx="2" cy="2" r="1.200" fill="none" stroke="#fff" stroke-width=".8"/><path d="M6.500 3c2 0 2 3.500-1 5.500 1-1.500 1-2 .8-2.500C4.500 6 5 3 6.500 3z" fill="#fff"/></svg></div>
    <div class="flex items-center gap-[2px]"><span>简</span><svg class="size-[10px]" viewBox="0 0 10 10" fill="none" stroke="#fff"><circle cx="5" cy="5" r="1.500" stroke-width=".8"/><circle cx="5" cy="5" r="3.400" stroke-width=".8"/><circle cx="5" cy="5" r="4.300" stroke-dasharray="1.700 1.677"/></svg></div>
  </div>
  <div class="flex items-center">
    <button aria-label="显示隐藏的图标" class="w-[14px]"><svg class="w-[9px] h-[6px]" viewBox="0 0 9 6"><path d="M.5 5l4-4 4 4" fill="none" stroke="#ddd"/></svg></button>
    <button aria-label="网络" class="w-[16px]"><svg class="w-[13px] h-[11px]" viewBox="0 0 13 11" fill="none" stroke="#ddd" stroke-width=".9"><path d="M3.500 1.500H12v6H3.500zM7.500 7.500V10M5 10h5.500M.5 1.500h2.500v3H.5zM1.800 4.500V9.500H4"/></svg></button>
    <button aria-label="音量" class="w-[19px]"><svg class="w-[12px] h-[10px]" viewBox="0 0 12 10" fill="none" stroke="#ddd" stroke-width=".9"><path d="M.5 3.500h2L5 1v8L2.500 6.500h-2zM6.500 3.500c1 1 1 2 0 3M8 2.500c1.500 1.500 1.500 3.500 0 5"/><path d="M9.500 1c2.300 2.500 2.300 5.500 0 8" stroke="#777"/></svg></button>
  </div>
  <div class="flex w-[68px] flex-col items-center justify-center whitespace-nowrap leading-[13px]"><time>15:29</time><span class="flex gap-[4px]"><span>2019/9/12</span><span>星期四</span></span></div>
  <button aria-label="操作中心" class="ml-[13px] mr-[13px]"><svg class="w-[12px] h-[12px]" viewBox="0 0 12 12"><path d="M.5 1h11v8H8L6 11.500V9H.500z" fill="#fff"/><path d="M2.500 3.500h7M2.500 5h7M2.500 6.700h4" stroke="#111" stroke-width=".7"/></svg></button>
  <span class="mr-px w-px bg-[#444]"></span>
</div>

<script>
  const letters = 'ABCDEFGHIJKLMNOPQRSTU'.split('');
  const data = {
    5: ['姓名', '年级', '班级', '数学分数'], 7: ['张三', '二年级', '3班', '98'], 9: ['王二', '三年级', '2班', '97.5'],
    11: ['张晓', '一年级', '2班', '97'], 13: ['马莉', '一年级', '1班', '96.5'], 14: ['李桂', '二年级', '1班', '96'],
    15: ['牛丽丽', '二年级', '2班', '95.5'], 17: ['杨树', '三年级', '4班', '95'], 18: ['赵熊', '三年级', '3班', '94']
  };
  document.getElementById('widths').innerHTML += '<col>'.repeat(21) + '<col class="w-[7px]">';
  document.getElementById('letters').innerHTML =
    '<th class="p-0 border-b border-[#d0d0d0]"><svg class="ml-[4px] w-[11px] h-[11px]" viewBox="0 0 11 11"><path d="M11 0v11H0z" fill="#b4b4b4"/></svg></th>' +
    letters.map((l, i) => i >= 6 && i <= 9
      ? '<th class="p-0 pt-[2px] pl-px font-normal border-r border-b border-r-[#bdbdbd] border-b-[#4f9a78] bg-[#d2d2d2] text-[#1b6a45]">' + l + '</th>'
      : '<th class="p-0 pt-[2px] pl-px font-normal border-r border-b border-r-[#cbcbcb] border-b-[#d6d6d6] text-[#555]">' + l + '</th>').join('') +
    '<th class="p-0 border-b border-[#d6d6d6]"></th>';
  let html = '';
  for (let r = 1; r <= 29; r++) {
    const sel = r >= 5 && r <= 18;
    html += '<tr>' + (sel
      ? '<th class="p-0 pt-[2px] font-normal border-b border-r border-b-[#b8b8b8] border-r-[#2f8a62] bg-[#d2d2d2] text-[#1b6a45]">'
      : '<th class="p-0 pt-[2px] font-normal border-b border-r border-b-[#cfcfcf] border-r-[#d6d6d6] bg-[#e6e6e6]">') + r + '</th>';
    for (let c = 0; c < 21; c++) {
      let cls = 'p-0 border-r border-b border-[#e4e4e4]';
      if (sel && c === 5) cls = 'p-0 border-r border-b border-b-[#e4e4e4] border-r-[#1f6e49]';
      if (r === 4 && c >= 6 && c <= 9) cls = 'p-0 border-r border-b border-r-[#e4e4e4] border-b-[#1f6e49]';
      if (sel && c >= 6 && c <= 9) {
        cls = 'p-0 pt-[2px] pl-px border-r border-b whitespace-nowrap text-[#333] ' +
          (r === 5 && c === 6 ? 'bg-white ' : 'bg-[#c6c6c6] ') +
          (c === 9 ? 'border-r-[#1f6e49] ' : 'border-r-[#979797] ') +
          (r === 18 ? 'border-b-[#1f6e49]' : 'border-b-[#979797]');
      }
      html += '<td class="' + cls + '">' + (sel && c >= 6 && c <= 9 && data[r] ? data[r][c - 6] : '') + '</td>';
    }
    html += '<td class="p-0 border-b border-[#e4e4e4]"></td></tr>';
  }
  document.getElementById('rows').innerHTML = html;

  // kind: r = radio, k = radio picked, c = sub tick box, s = sub radio, p = sub radio picked
  const left = [['r','批注','C'],['r','常量','O'],['r','公式','F'],['c','数字','U'],['c','文本','X'],['c','逻辑值','G'],['c','错误','E'],['k','空值','K'],['r','当前区域','R'],['r','当前数组','A'],['r','对象','B']];
  const right = [['r','行内容差异单元格','W'],['r','列内容差异单元格','M'],['r','引用单元格','P'],['r','从属单元格','D'],['p','直属','I'],['s','所有级别','L'],['r','最后一个单元格','S'],['r','可见单元格','Y'],['r','条件格式','T'],['r','数据验证','V'],['p','全部','L'],['s','相同','E']];
  const draw = (list) => {
    let group = 0;
    return list.map(([k, t, key]) => {
      if (k === 'p') group++;
      if (k === 'c') return '<label class="flex h-[16px] items-center gap-[2px] pl-[12px] text-[#999]"><span class="relative flex size-[9px]"><input type="checkbox" checked disabled class="size-[9px] appearance-none border border-[#ccc] bg-[#f6f6f6]"><svg class="absolute inset-0 size-[9px]" viewBox="0 0 9 9"><path d="M2 4.500l2 2L7.500 2.500" fill="none" stroke="#bbb"/></svg></span><span>' + t + '<span class="text-[9px]">(' + key + ')</span></span></label>';
      if (k === 's' || k === 'p') return '<label class="flex h-[16px] items-center gap-[2px] pl-[12px] text-[#999]"><input type="radio" name="sub' + group + '" disabled ' + (k === 'p' ? 'checked ' : '') + 'class="size-[9px] appearance-none rounded-full border border-[#ccc] bg-[#f8f8f8] checked:bg-[radial-gradient(#bbb_40%,#f8f8f8_48%)]"><span>' + t + '<span class="text-[9px]">(' + key + ')</span></span></label>';
      return '<label class="flex h-[16px] items-center gap-[2px]"><input type="radio" name="target" ' + (k === 'k' ? 'checked ' : '') + 'class="size-[9px] shrink-0 appearance-none rounded-full border border-[#666] bg-white checked:bg-[radial-gradient(#222_40%,#fff_48%)]"><span class="whitespace-nowrap' + (k === 'k' ? ' outline-1 outline-dotted outline-[#bbb]' : '') + '">' + t + '<span class="text-[9px]">(<u>' + key + '</u>)</span></span></label>';
    }).join('');
  };
  document.getElementById('left').innerHTML = draw(left);
  document.getElementById('right').innerHTML = draw(right);
</script>
</body>
</html>
